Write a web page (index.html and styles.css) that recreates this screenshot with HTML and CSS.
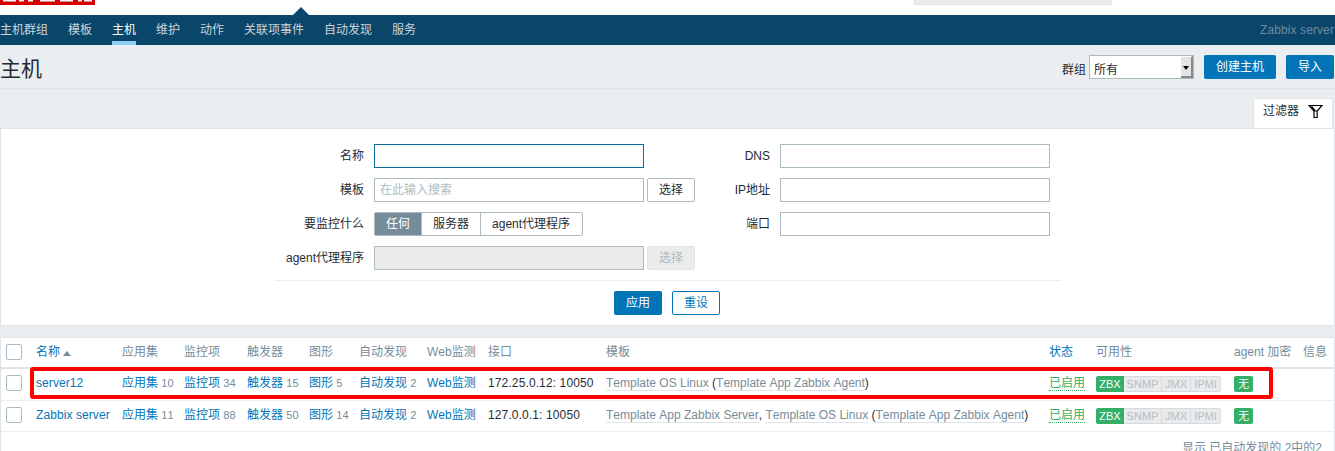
FILE: index.html
```html
<!DOCTYPE html>
<html lang="zh">
<head>
<meta charset="utf-8">
<title>主机</title>
<link rel="stylesheet" href="styles.css">
</head>
<body>
<header class="topbar">
  <svg class="logo" width="95" height="5" viewBox="0 0 95 5"><rect width="95" height="5" fill="#d40000"/><path d="M3 0H16V1.4H3ZM19 0H24V1.4H19ZM28 0H33V1.4H28ZM40 0H55V1.4H40ZM60 0H73V1.4H60ZM78 0H82V1.4H78ZM84 0H92V1.4H84Z" fill="#fff"/></svg>
  <div class="search"></div>
  <svg class="caret" width="16" height="8" viewBox="0 0 16 8"><path d="M0 8 L8 0 L16 8 Z" fill="#0a466a"/></svg>
</header>
<nav class="nav">
  <ul class="nav-list">
    <li>主机群组</li><li>模板</li><li class="active">主机</li><li>维护</li><li>动作</li><li>关联项事件</li><li>自动发现</li><li>服务</li>
  </ul>
  <span class="server-name">Zabbix server</span>
</nav>
<section class="title-bar">
  <h1>主机</h1>
  <div class="title-controls">
    <label class="group-label">群组</label>
    <div class="fake-select"><span>所有</span><i class="select-arrow"></i></div>
    <button class="btn">创建主机</button>
    <button class="btn btn-import">导入</button>
  </div>
</section>
<div class="tab-row"><div class="filter-tab">过滤器
  <svg width="15" height="15" viewBox="0 0 15 15"><path d="M1 1.5 H14 L9.2 7 V13.5 L6 13.5 V7 Z M3.5 2.5 L7 6.5 M6 7 H9" fill="none" stroke="#000" stroke-width="1.2"/></svg>
</div></div>
<section class="filter">
  <div class="filter-cols">
    <div class="f-col">
      <div class="f-row"><label>名称</label><input class="inp inp-focus" type="text"></div>
      <div class="f-row"><label>模板</label><input class="inp" type="text" placeholder="在此输入搜索"><button class="btn-sel">选择</button></div>
      <div class="f-row"><label>要监控什么</label>
        <div class="seg"><span class="seg-on">任何</span><span>服务器</span><span class="seg-last">agent代理程序</span></div>
      </div>
      <div class="f-row"><label>agent代理程序</label><input class="inp inp-off" type="text" disabled><button class="btn-sel btn-off">选择</button></div>
    </div>
    <div class="f-col f-col-right">
      <div class="f-row"><label>DNS</label><input class="inp" type="text"></div>
      <div class="f-row"><label>IP地址</label><input class="inp" type="text"></div>
      <div class="f-row"><label>端口</label><input class="inp" type="text"></div>
    </div>
  </div>
  <div class="f-actions"><button class="btn btn-apply">应用</button><button class="btn-outline">重设</button></div>
</section>
<section class="hosts">
  <table>
    <colgroup>
      <col class="c0"><col class="c1"><col class="c2"><col class="c3"><col class="c4"><col class="c5"><col class="c6"><col class="c7"><col class="c8"><col class="c9"><col class="c10"><col class="c11"><col class="c12"><col class="c13">
    </colgroup>
    <thead>
      <tr>
        <th class="chk"><span class="cb"></span></th>
        <th class="sort"><a>名称</a><i class="up"></i></th>
        <th>应用集</th><th>监控项</th><th>触发器</th><th>图形</th><th>自动发现</th><th>Web监测</th><th>接口</th><th>模板</th>
        <th class="sort"><a>状态</a></th><th>可用性</th><th>agent 加密</th><th>信息</th>
      </tr>
    </thead>
    <tbody>
      <tr>
        <td class="chk"><span class="cb"></span></td><td class="host"><a>server12</a></td>
        <td><a>应用集</a> <small>10</small></td><td><a>监控项</a> <small>34</small></td><td><a>触发器</a> <small>15</small></td><td><a>图形</a> <small>5</small></td><td><a>自动发现</a> <small>2</small></td><td><a>Web监测</a></td>
        <td class="ip">172.25.0.12: 10050</td>
        <td><a class="tpl">Template OS Linux</a> (<a class="tpl">Template App Zabbix Agent</a>)</td>
        <td><span class="on">已启用</span></td>
        <td><span class="avail"><b>ZBX</b><span class="w-snmp">SNMP</span><span class="w-jmx">JMX</span><span class="w-ipmi">IPMI</span></span></td>
        <td><b class="enc">无</b></td><td></td>
      </tr>
      <tr>
        <td class="chk"><span class="cb"></span></td><td class="host"><a>Zabbix server</a></td>
        <td><a>应用集</a> <small>11</small></td><td><a>监控项</a> <small>88</small></td><td><a>触发器</a> <small>50</small></td><td><a>图形</a> <small>14</small></td><td><a>自动发现</a> <small>2</small></td><td><a>Web监测</a></td>
        <td class="ip">127.0.0.1: 10050</td>
        <td><a class="tpl">Template App Zabbix Server</a>, <a class="tpl">Template OS Linux</a> (<a class="tpl">Template App Zabbix Agent</a>)</td>
        <td><span class="on">已启用</span></td>
        <td><span class="avail"><b>ZBX</b><span class="w-snmp">SNMP</span><span class="w-jmx">JMX</span><span class="w-ipmi">IPMI</span></span></td>
        <td><b class="enc">无</b></td><td></td>
      </tr>
    </tbody>
  </table>
  <div class="t-foot">显示 已自动发现的 2中的2</div>
  <div class="highlight"></div>
</section>
</body>
</html>
```
FILE: styles.css
```css
* { box-sizing: border-box; }
html, body { margin: 0; height: 451px; overflow: hidden; }
body { background: #ebeef0; color: #1f2c33; font: 12px/14px "Liberation Sans", "Noto Sans CJK SC", sans-serif; font-kerning: none; position: relative; }
a { color: #0275b8; }
.topbar { height: 15px; background: #fff; position: relative; }
.logo { display: block; }
.search { position: absolute; left: 914px; top: 0; width: 198px; height: 5px; background: #ebebeb; border: 1px solid #dfe4e7; border-top: 0; }
.caret { position: absolute; left: 293px; top: 7px; display: block; }
.nav { height: 30px; background: #0a466a; display: flex; justify-content: space-between; align-items: center; }
.nav-list { list-style: none; margin: 0; padding: 0; display: flex; gap: 20px; height: 30px; }
.nav-list li { color: #cbd5db; line-height: 31px; position: relative; }
.nav-list li.active { color: #fff; border-bottom: 4px solid #8bcdf5; height: 30px; }
.server-name { color: #6e8a9b; white-space: nowrap; letter-spacing: 0.1px; padding-right: 1px; }
.title-bar { height: 44px; border-bottom: 1px solid #dfe4e7; display: flex; justify-content: space-between; padding: 10px 1px 0 0; }
h1 { margin: 0; font-size: 21px; font-weight: 400; line-height: 27px; color: #1f2c33; }
.title-controls { display: flex; align-items: flex-start; }
.group-label { line-height: 30px; margin-right: 3px; color: #1f2c33; }
.fake-select { width: 105px; height: 24px; background: #fff; border: 1px solid #acbbc2; margin-right: 10px; position: relative; padding-left: 4px; line-height: 28px; }
.select-arrow { position: absolute; right: 0; top: 0; width: 12px; height: 22px; background: #e4e4e4; border-right: 2px solid #888; border-bottom: 2px solid #888; border-top: 1px solid #fff; }
.select-arrow::after { content: ""; position: absolute; left: 2px; top: 9px; border: 3px solid transparent; border-top: 4px solid #000; border-bottom: 0; }
.btn { height: 24px; border: 0; border-radius: 2px; background: #0275b8; color: #fff; font: inherit; padding: 0; width: 72px; }
.btn-import { width: 48px; margin-left: 10px; }
.tab-row { display: flex; justify-content: flex-end; height: 39px; padding: 9px 2px 0 0; }
.filter-tab { width: 80px; height: 30px; background: #fff; border: 1px solid #dfe4e7; border-bottom: 0; display: flex; justify-content: space-between; padding: 5px 9px 0 9px; line-height: 14px; }
.filter { height: 198px; background: #fff; border: 1px solid #dfe4e7; position: relative; }
.filter-cols { display: flex; padding: 15px 0 0 0; }
.f-col { width: 694px; flex: none; display: flex; flex-direction: column; gap: 10px; }
.f-col-right { width: 355px; }
.f-row { display: flex; align-items: center; height: 24px; }
.f-row label { width: 373px; text-align: right; padding-right: 10px; flex: none; }
.f-col-right .f-row label { width: 85px; }
.inp { width: 270px; flex: none; height: 24px; border: 1px solid #acbbc2; background: #fff; padding: 0 5px; font: inherit; outline: 0; }
.inp::placeholder { color: #acbbc2; }
.inp-focus { border-color: #0a6da3; }
.inp-off { background: #ebebeb; }
.btn-sel { width: 48px; flex: none; height: 24px; margin-left: 3px; background: #fff; border: 1px solid #acbbc2; border-radius: 2px; font: inherit; color: #1f2c33; padding: 0; }
.btn-off { background: #ebebeb; color: #acbbc2; border-color: #dfe4e7; }
.seg { display: flex; height: 24px; border: 1px solid #acbbc2; border-radius: 2px; }
.seg span { padding: 0 11px; line-height: 22px; border-left: 1px solid #acbbc2; }
.seg span:first-child { border-left: 0; }
.seg .seg-on { background: #768d99; color: #fff; padding: 0 11px; }
.seg .seg-last { padding-right: 12px; }
.f-actions { margin: 10px 0 0 274px; width: 786px; border-top: 1px solid #ebeef0; padding: 10px 0 0 339px; display: flex; gap: 10px; }
.btn-apply { width: 48px; }
.btn-outline { width: 48px; height: 24px; background: #fff; border: 1px solid #0275b8; border-radius: 2px; color: #0275b8; font: inherit; padding: 0; }
.hosts { margin-top: 11px; height: 115px; background: #fff; border: 1px solid #dfe4e7; border-bottom: 0; position: relative; }
table { width: 1333px; table-layout: fixed; border-collapse: separate; border-spacing: 0; }
.c0 { width: 30px; } .c1 { width: 86px; } .c2 { width: 62px; } .c3 { width: 63px; } .c4 { width: 62px; } .c5 { width: 50px; } .c6 { width: 68px; } .c7 { width: 61px; } .c8 { width: 118px; } .c9 { width: 443px; } .c10 { width: 47px; } .c11 { width: 138px; } .c12 { width: 69px; } .c13 { width: 36px; }
th { font-weight: 400; color: #768d99; text-align: left; vertical-align: top; padding: 7px 0 0 5px; height: 31px; border-bottom: 2px solid #dfe4e7; white-space: nowrap; }
td { vertical-align: top; padding: 7px 0 0 5px; height: 31px; border-bottom: 1px solid #ebeef0; white-space: nowrap; }
tbody tr:first-child td { height: 32px; }
th.chk, td.chk { padding-top: 6px; }
td.host { letter-spacing: 0.08px; }
td.ip { letter-spacing: 0.12px; }
.sort a { color: #0275b8; }
.up { display: inline-block; margin-left: 3px; border: 4px solid transparent; border-top: 0; border-bottom: 5px solid #768d99; }
.cb { display: block; width: 16px; height: 16px; border: 1px solid #acbbc2; border-radius: 2px; background: #fff; }
small { font-size: 11px; color: #768d99; }
.tpl { color: #768d99; border-bottom: 1px solid #dfe4e7; }
.on { color: #34af67; border-bottom: 1px dotted #34af67; }
.avail { display: flex; font-size: 11px; height: 16px; line-height: 14px; text-align: center; }
.avail b { font-weight: 400; width: 28px; line-height: 16px; background: #34af67; color: #fff; border-radius: 2px 0 0 2px; }
.avail span { background: #ebebeb; color: #b4bfc5; border: 1px solid #d5dce0; border-left: 0; }
.avail .w-snmp { width: 38px; }
.avail .w-jmx { width: 29px; }
.avail .w-ipmi { width: 30px; border-radius: 0 2px 2px 0; }
.enc { display: block; font-weight: 400; background: #34af67; color: #fff; font-size: 11px; width: 19px; height: 16px; line-height: 16px; text-align: center; border-radius: 2px; }
.t-foot { text-align: right; padding: 9px 12px 0 0; color: #768d99; }
.highlight { position: absolute; left: 29px; top: 29px; width: 1243px; height: 32px; border: 4px solid #f00; border-radius: 3px; }
```
